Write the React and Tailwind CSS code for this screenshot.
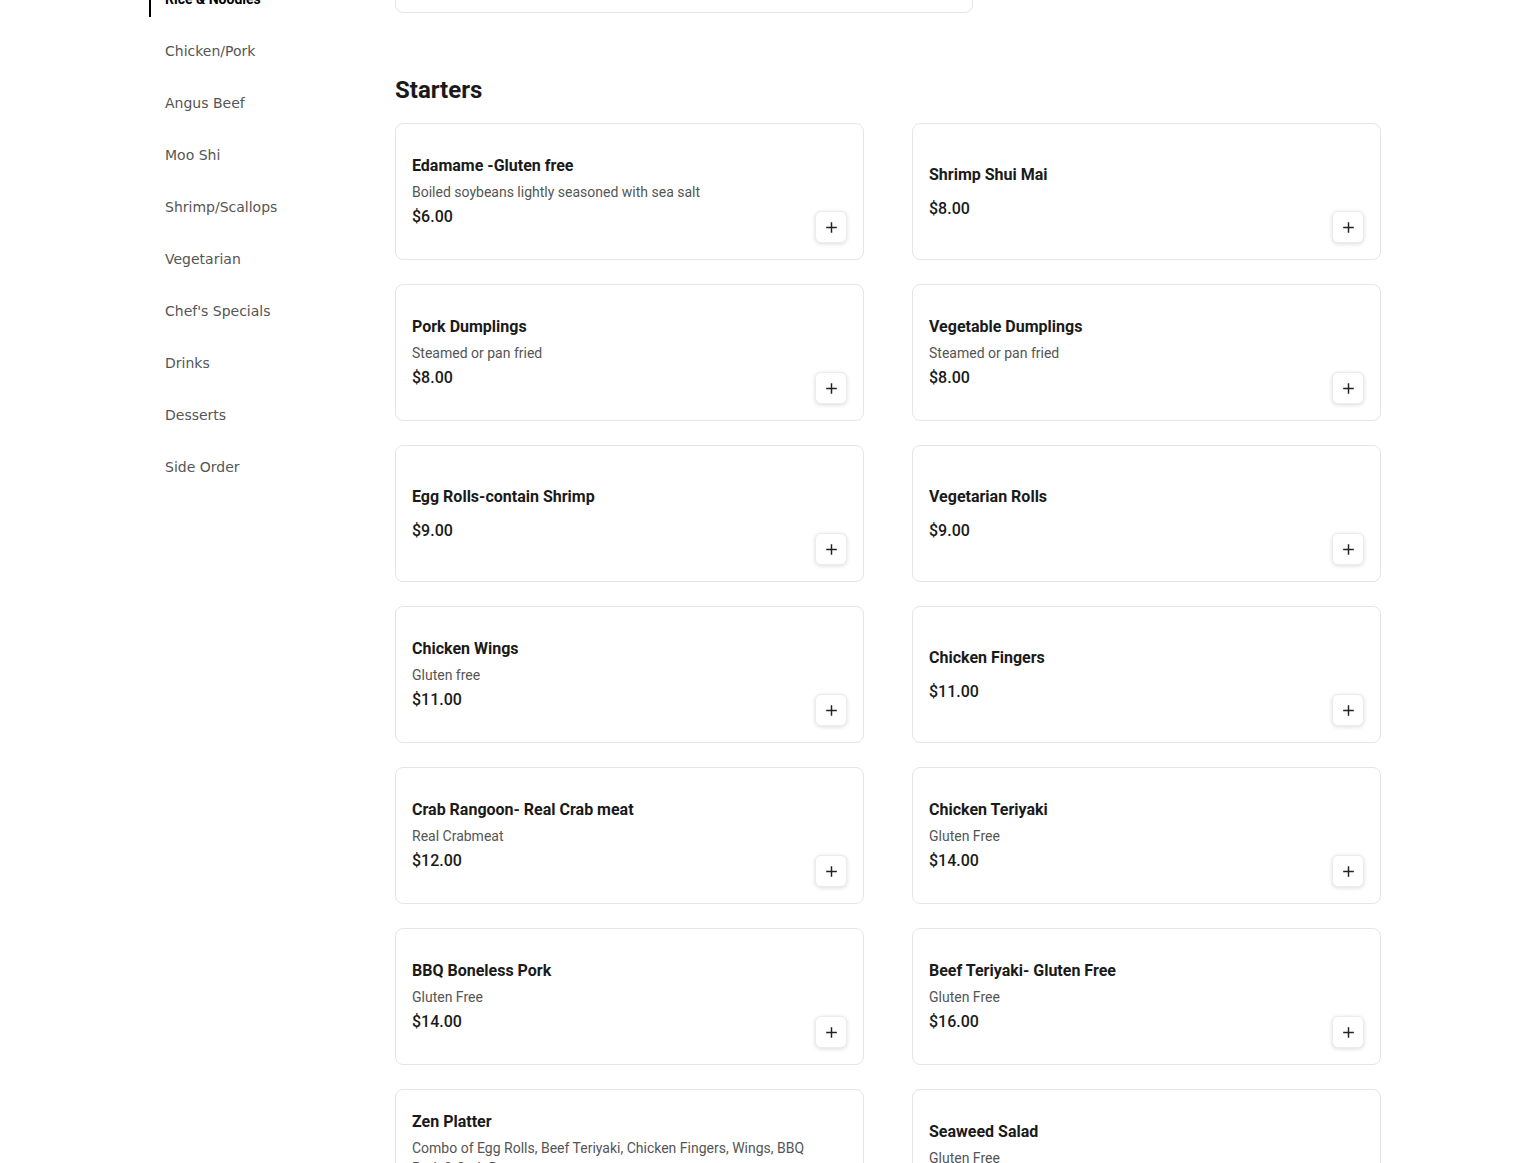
import React from 'react';

const categories = [
  'Rice & Noodles',
  'Chicken/Pork',
  'Angus Beef',
  'Moo Shi',
  'Shrimp/Scallops',
  'Vegetarian',
  "Chef's Specials",
  'Drinks',
  'Desserts',
  'Side Order',
];

const starters = [
  { name: 'Edamame -Gluten free', desc: 'Boiled soybeans lightly seasoned with sea salt', price: '$6.00' },
  { name: 'Shrimp Shui Mai', price: '$8.00' },
  { name: 'Pork Dumplings', desc: 'Steamed or pan fried', price: '$8.00' },
  { name: 'Vegetable Dumplings', desc: 'Steamed or pan fried', price: '$8.00' },
  { name: 'Egg Rolls-contain Shrimp', price: '$9.00' },
  { name: 'Vegetarian Rolls', price: '$9.00' },
  { name: 'Chicken Wings', desc: 'Gluten free', price: '$11.00' },
  { name: 'Chicken Fingers', price: '$11.00' },
  { name: 'Crab Rangoon- Real Crab meat', desc: 'Real Crabmeat', price: '$12.00' },
  { name: 'Chicken Teriyaki', desc: 'Gluten Free', price: '$14.00' },
  { name: 'BBQ Boneless Pork', desc: 'Gluten Free', price: '$14.00' },
  { name: 'Beef Teriyaki- Gluten Free', desc: 'Gluten Free', price: '$16.00' },
  { name: 'Zen Platter', desc: 'Combo of Egg Rolls, Beef Teriyaki, Chicken Fingers, Wings, BBQ Pork & Crab Rangoon', price: '$28.00' },
  { name: 'Seaweed Salad', desc: 'Gluten Free', price: '$8.00' },
];

function PlusIcon() {
  return (
    <svg width="11" height="11" viewBox="0 0 12 12" fill="none" stroke="#222" strokeWidth="1.6" strokeLinecap="square">
      <path d="M6 1v10M1 6h10" />
    </svg>
  );
}

function ItemCard({ item }) {
  return (
    <div className="flex min-h-[137px] rounded-lg border border-[#e5e5e5] bg-white p-4">
      <div className="flex flex-1 flex-col justify-center pr-1">
        <div className="text-[16px] font-bold leading-6 text-[#1a1a1a]">{item.name}</div>
        {item.desc ? (
          <div className="mt-1 text-[14px] leading-5 text-[#555]">{item.desc}</div>
        ) : null}
        <div className={`${item.desc ? 'mt-[3px]' : 'mt-[10px]'} text-[16px] font-medium leading-6 text-[#1a1a1a]`}>
          {item.price}
        </div>
      </div>
      <button className="flex h-8 w-8 shrink-0 items-center justify-center self-end rounded-md border border-[#ececec] bg-white shadow-[0_1px_4px_rgba(0,0,0,0.14)]">
        <PlusIcon />
      </button>
    </div>
  );
}

export default function App() {
  return (
    <div className="min-h-screen overflow-hidden bg-white">
      <div className="mx-auto -mt-[43px] flex w-[1232px] items-start">
        <nav className="w-[246px] shrink-0 pt-6 font-['DejaVu_Sans',sans-serif]">
          <ul className="flex flex-col gap-4">
            {categories.map((c, i) => (
              <li
                key={c}
                className={
                  i === 0
                    ? "flex h-9 items-center border-l-2 border-black pl-[14px] font-['Roboto',sans-serif] text-[14px] font-bold text-black"
                    : 'flex h-9 items-center border-l-2 border-transparent pl-[14px] text-[14px] text-[#555]'
                }
              >
                {c}
              </li>
            ))}
          </ul>
        </nav>

        <main className="flex-1 font-['Roboto',sans-serif]">
          <div className="h-[56px] w-[578px] rounded-lg border border-[#e3e3e3] bg-white" />

          <h2 className="mt-[61px] mb-[17px] text-[24px] font-bold leading-8 text-[#1a1a1a]">Starters</h2>

          <div className="grid grid-cols-2 gap-x-12 gap-y-6">
            {starters.map(item => (
              <ItemCard key={item.name} item={item} />
            ))}
          </div>
        </main>
      </div>
    </div>
  );
}
